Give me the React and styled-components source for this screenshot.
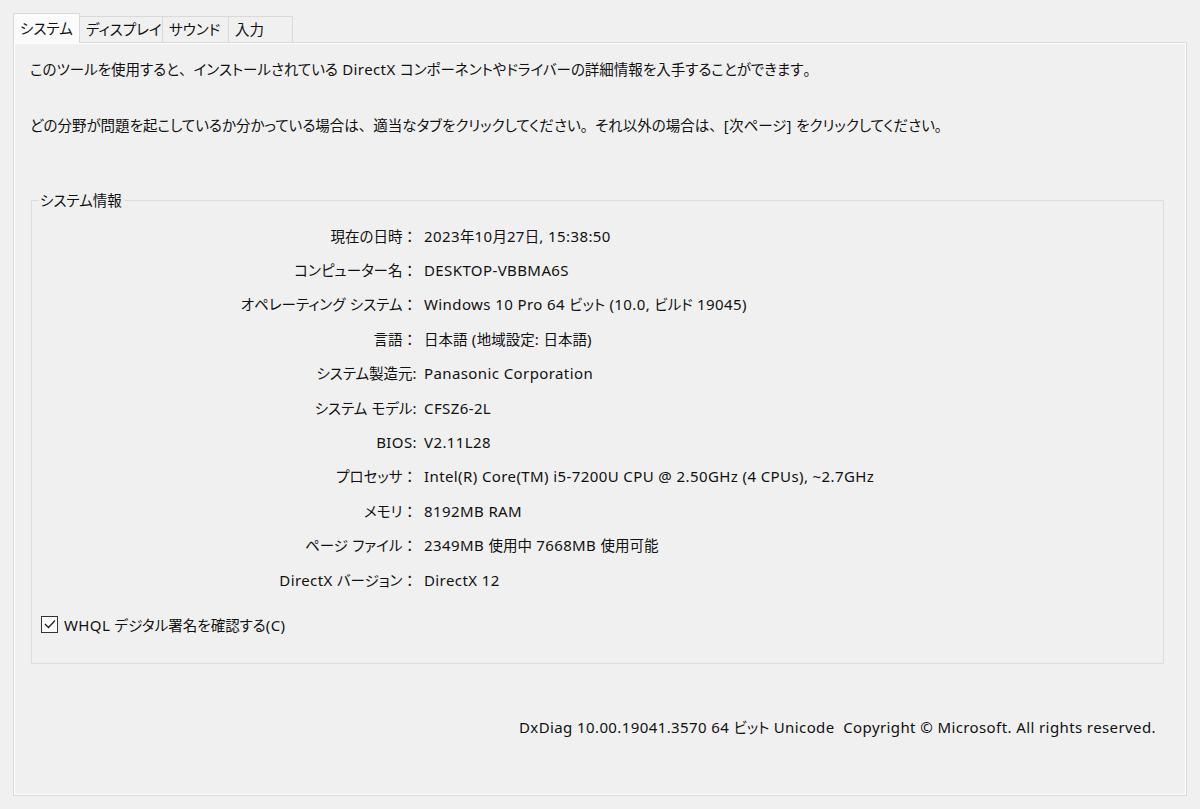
import styled, { createGlobalStyle } from "styled-components";

const GlobalStyle = createGlobalStyle`
  html, body {
    margin: 0;
    padding: 0;
    background: #f0f0f0;
  }
  body {
    font-family: "Noto Sans CJK JP", "Noto Sans", sans-serif;
    font-size: 14.5px;
    font-feature-settings: "palt";
    color: #111;
  }
`;

const Window = styled.div`
  width: 1200px;
  height: 809px;
  box-sizing: border-box;
  padding: 13px 13px 0 13px;
  display: flex;
  flex-direction: column;
`;

const TabStrip = styled.div`
  display: flex;
  align-items: flex-end;
  height: 30px;
  position: relative;
  z-index: 1;
`;

const Tab = styled.div`
  box-sizing: border-box;
  width: ${(p) => p.$w}px;
  height: ${(p) => (p.$active ? "30px" : "27px")};
  padding: 0 6px;
  line-height: ${(p) => (p.$active ? "28px" : "24px")};
  background: ${(p) => (p.$active ? "#fbfbfb" : "#f0f0f0")};
  border: 1px solid #d9d9d9;
  border-bottom: ${(p) => (p.$active ? "none" : "1px solid #d9d9d9")};
  border-left: ${(p) => (p.$first || p.$active ? "1px solid #d9d9d9" : "none")};
  white-space: nowrap;
`;

const Panel = styled.div`
  flex: 0 0 754px;
  box-sizing: border-box;
  margin-top: -1px;
  border: 1px solid #d9d9d9;
  box-shadow: inset 1px 1px 0 #fff, inset -1px -1px 0 #fff;
  padding: 0 30px 0 16px;
  display: flex;
  flex-direction: column;
`;

const Intro = styled.p`
  margin: ${(p) => p.$top}px 0 0 0;
  line-height: 20px;
  white-space: nowrap;
`;

const GroupBox = styled.fieldset`
  margin: 55px -8px 0 1px;
  padding: 8px 0 29px 9px;
  border: 1px solid #dcdcdc;
  min-width: 0;
`;

const Legend = styled.legend`
  margin-left: -2px;
  padding: 0 3px 0 1px;
  line-height: 20px;
`;

const InfoGrid = styled.div`
  display: grid;
  grid-template-columns: 376px 1fr;
  column-gap: 7px;
  grid-auto-rows: 34.4px;
  align-items: center;
`;

const Label = styled.div`
  text-align: right;
  white-space: nowrap;
`;

const Value = styled.div`
  white-space: nowrap;
`;

const CheckRow = styled.label`
  display: flex;
  align-items: center;
  gap: 6px;
  margin-top: 18px;
  height: 20px;
`;

const CheckBox = styled.span`
  box-sizing: border-box;
  width: 17px;
  height: 17px;
  border: 1px solid #333;
  background: #fff;
  display: flex;
  align-items: center;
  justify-content: center;
`;

const Footer = styled.div`
  margin-top: 53px;
  line-height: 20px;
  text-align: right;
`;

const Latin = styled.span`
  font-family: "Noto Sans", sans-serif;
  font-size: 15px;
  letter-spacing: 0.4px;
`;

const Punct = styled.span`
  font-feature-settings: normal;
`;

// split a string into latin runs, full-width punctuation and japanese runs
function Txt({ children }) {
  const parts = String(children).match(/[\u0020-\u00ff]+|[、。：]|[^\u0020-\u00ff、。：]+/g) || [];
  return parts.map((s, i) => {
    if (/^[\u0020-\u00ff]/.test(s)) return <Latin key={i}>{s}</Latin>;
    if (/^[、。：]$/.test(s)) return <Punct key={i}>{s}</Punct>;
    return <span key={i}>{s}</span>;
  });
}

const rows = [
  ["現在の日時：", "2023年10月27日, 15:38:50"],
  ["コンピューター名：", "DESKTOP-VBBMA6S"],
  ["オペレーティング システム：", "Windows 10 Pro 64 ビット (10.0, ビルド 19045)"],
  ["言語：", "日本語 (地域設定: 日本語)"],
  ["システム製造元:", "Panasonic Corporation"],
  ["システム モデル:", "CFSZ6-2L"],
  ["BIOS:", "V2.11L28"],
  ["プロセッサ：", "Intel(R) Core(TM) i5-7200U CPU @ 2.50GHz (4 CPUs), ~2.7GHz"],
  ["メモリ：", "8192MB RAM"],
  ["ページ ファイル：", "2349MB 使用中 7668MB 使用可能"],
  ["DirectX バージョン：", "DirectX 12"],
];

const tabs = [
  ["システム", 67],
  ["ディスプレイ", 83],
  ["サウンド", 66],
  ["入力", 64],
];

export default function App() {
  return (
    <>
      <GlobalStyle />
      <Window>
        <TabStrip>
          {tabs.map(([name, w], i) => (
            <Tab key={name} $w={w} $active={i === 0} $first={i === 0}>
              {name}
            </Tab>
          ))}
        </TabStrip>
        <Panel>
          <Intro $top={16}>
            <Txt>このツールを使用すると、インストールされている DirectX コンポーネントやドライバーの詳細情報を入手することができます。</Txt>
          </Intro>
          <Intro $top={36}>
            <Txt>どの分野が問題を起こしているか分かっている場合は、適当なタブをクリックしてください。それ以外の場合は、[次ページ] をクリックしてください。</Txt>
          </Intro>
          <GroupBox>
            <Legend>システム情報</Legend>
            <InfoGrid>
              {rows.map(([label, value]) => [
                <Label key={label}>
                  <Txt>{label}</Txt>
                </Label>,
                <Value key={label + "v"}>
                  <Txt>{value}</Txt>
                </Value>,
              ])}
            </InfoGrid>
            <CheckRow>
              <CheckBox>
                <svg width="12" height="10" viewBox="0 0 12 10">
                  <path d="M1 5 L4.5 8.5 L11 1.5" fill="none" stroke="#222" strokeWidth="1.3" />
                </svg>
              </CheckBox>
              <span>
                <Txt>WHQL デジタル署名を確認する(C)</Txt>
              </span>
            </CheckRow>
          </GroupBox>
          <Footer>
            <Txt>{"DxDiag 10.00.19041.3570 64 ビット Unicode\u00a0 Copyright © Microsoft. All rights reserved."}</Txt>
          </Footer>
        </Panel>
      </Window>
    </>
  );
}
